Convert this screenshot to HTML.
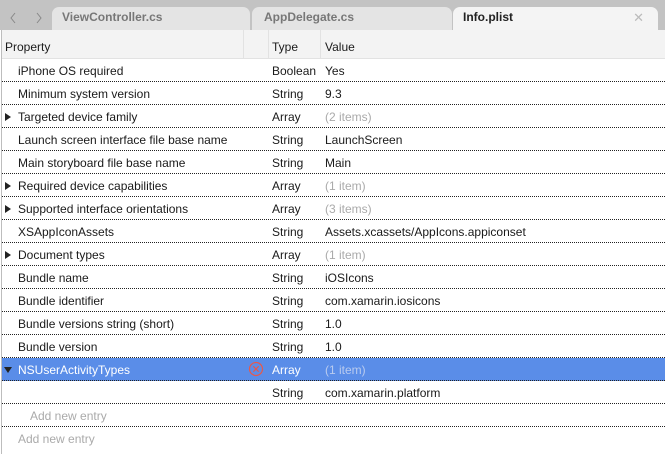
<!DOCTYPE html>
<html><head><meta charset="utf-8"><style>
*{margin:0;padding:0;box-sizing:border-box}
body{width:665px;height:454px;overflow:hidden;background:#fff;font-family:"Liberation Sans",Helvetica,Arial,sans-serif;font-size:12px;color:#1a1a1a;position:relative}
.bar{position:absolute;left:0;top:0;width:665px;height:30px;background:#c3c3c3}
.tab{position:absolute;top:7px;height:23px;background:#e4e4e4;border-radius:7px 7px 0 0;font-weight:bold;color:#777;font-size:12px;line-height:21px}
.tab.a{background:#f4f4f4;color:#222}
.hdr{position:absolute;left:2px;top:30px;width:663px;height:29px;background:#f3f3f3;border-bottom:1px solid #e2e2e2}
.hdr span{position:absolute;top:10px}
.vs{position:absolute;top:30px;width:1px;height:28px;background:#e2e2e2}
.lb{position:absolute;left:1px;top:30px;width:1px;height:424px;background:#bdbdbd}
.row{position:absolute;left:2px;width:663px;height:23px;border-bottom:1px dotted #222}
.row span{position:absolute;top:5px;white-space:nowrap}
.p{left:16px}.t{left:270px}.v{left:323px}
.g{color:#aaa}
.tri{position:absolute;left:3px;top:8px;width:0;height:0;border-top:4px solid transparent;border-bottom:4px solid transparent;border-left:6px solid #222}
.sel{background:#5a8de8;color:#fff}
.sel .v{color:#b9cbef}
</style></head><body>
<div class="bar"></div>
<svg style="position:absolute;left:8px;top:11px" width="40" height="14" viewBox="0 0 40 14"><path d="M7 2L3 7L7 12M29 2L33 7L29 12" fill="none" stroke="#888" stroke-width="1"/></svg>
<div class="tab" style="left:52px;width:198px;padding-left:10px">ViewController.cs</div>
<div class="tab" style="left:252px;width:200px;padding-left:12px">AppDelegate.cs</div>
<div class="tab a" style="left:453px;width:205px;padding-left:10px">Info.plist<span style="position:absolute;right:14px;top:0;color:#bbb;font-weight:normal;font-size:13px">✕</span></div>
<div class="hdr"><span style="left:3px">Property</span><span style="left:270px">Type</span><span style="left:323px">Value</span></div>
<div class="vs" style="left:243px"></div><div class="vs" style="left:268px"></div><div class="vs" style="left:320px"></div>

<div class="row" style="top:59px"><span class="p">iPhone OS required</span><span class="t">Boolean</span><span class="v">Yes</span></div>
<div class="row" style="top:82px"><span class="p">Minimum system version</span><span class="t">String</span><span class="v">9.3</span></div>
<div class="row" style="top:105px"><i class="tri"></i><span class="p">Targeted device family</span><span class="t">Array</span><span class="v g">(2 items)</span></div>
<div class="row" style="top:128px"><span class="p">Launch screen interface file base name</span><span class="t">String</span><span class="v">LaunchScreen</span></div>
<div class="row" style="top:151px"><span class="p">Main storyboard file base name</span><span class="t">String</span><span class="v">Main</span></div>
<div class="row" style="top:174px"><i class="tri"></i><span class="p">Required device capabilities</span><span class="t">Array</span><span class="v g">(1 item)</span></div>
<div class="row" style="top:197px"><i class="tri"></i><span class="p">Supported interface orientations</span><span class="t">Array</span><span class="v g">(3 items)</span></div>
<div class="row" style="top:220px"><span class="p">XSAppIconAssets</span><span class="t">String</span><span class="v">Assets.xcassets/AppIcons.appiconset</span></div>
<div class="row" style="top:243px"><i class="tri"></i><span class="p">Document types</span><span class="t">Array</span><span class="v g">(1 item)</span></div>
<div class="row" style="top:266px"><span class="p">Bundle name</span><span class="t">String</span><span class="v">iOSIcons</span></div>
<div class="row" style="top:289px"><span class="p">Bundle identifier</span><span class="t">String</span><span class="v">com.xamarin.iosicons</span></div>
<div class="row" style="top:312px"><span class="p">Bundle versions string (short)</span><span class="t">String</span><span class="v">1.0</span></div>
<div class="row" style="top:335px"><span class="p">Bundle version</span><span class="t">String</span><span class="v">1.0</span></div>
<div class="row sel" style="top:358px"><i class="tri" style="border:none;border-left:4px solid transparent;border-right:4px solid transparent;border-top:6px solid #222;top:9px;left:2px"></i><span class="p">NSUserActivityTypes</span>
<svg style="position:absolute;left:246px;top:3px" width="16" height="16" viewBox="0 0 16 16"><circle cx="8" cy="8" r="6.5" fill="none" stroke="#e8584a" stroke-width="1.2"/><path d="M5.3 5.3L10.7 10.7M10.7 5.3L5.3 10.7" stroke="#e8584a" stroke-width="1.2"/></svg>
<span class="t">Array</span><span class="v">(1 item)</span></div>
<div class="row" style="top:381px"><span class="t">String</span><span class="v">com.xamarin.platform</span></div>
<div class="row" style="top:404px"><span class="p g" style="left:28px">Add new entry</span></div>
<div class="row" style="top:427px;border:none"><span class="p g">Add new entry</span></div>
<div class="lb"></div>
</body></html>
